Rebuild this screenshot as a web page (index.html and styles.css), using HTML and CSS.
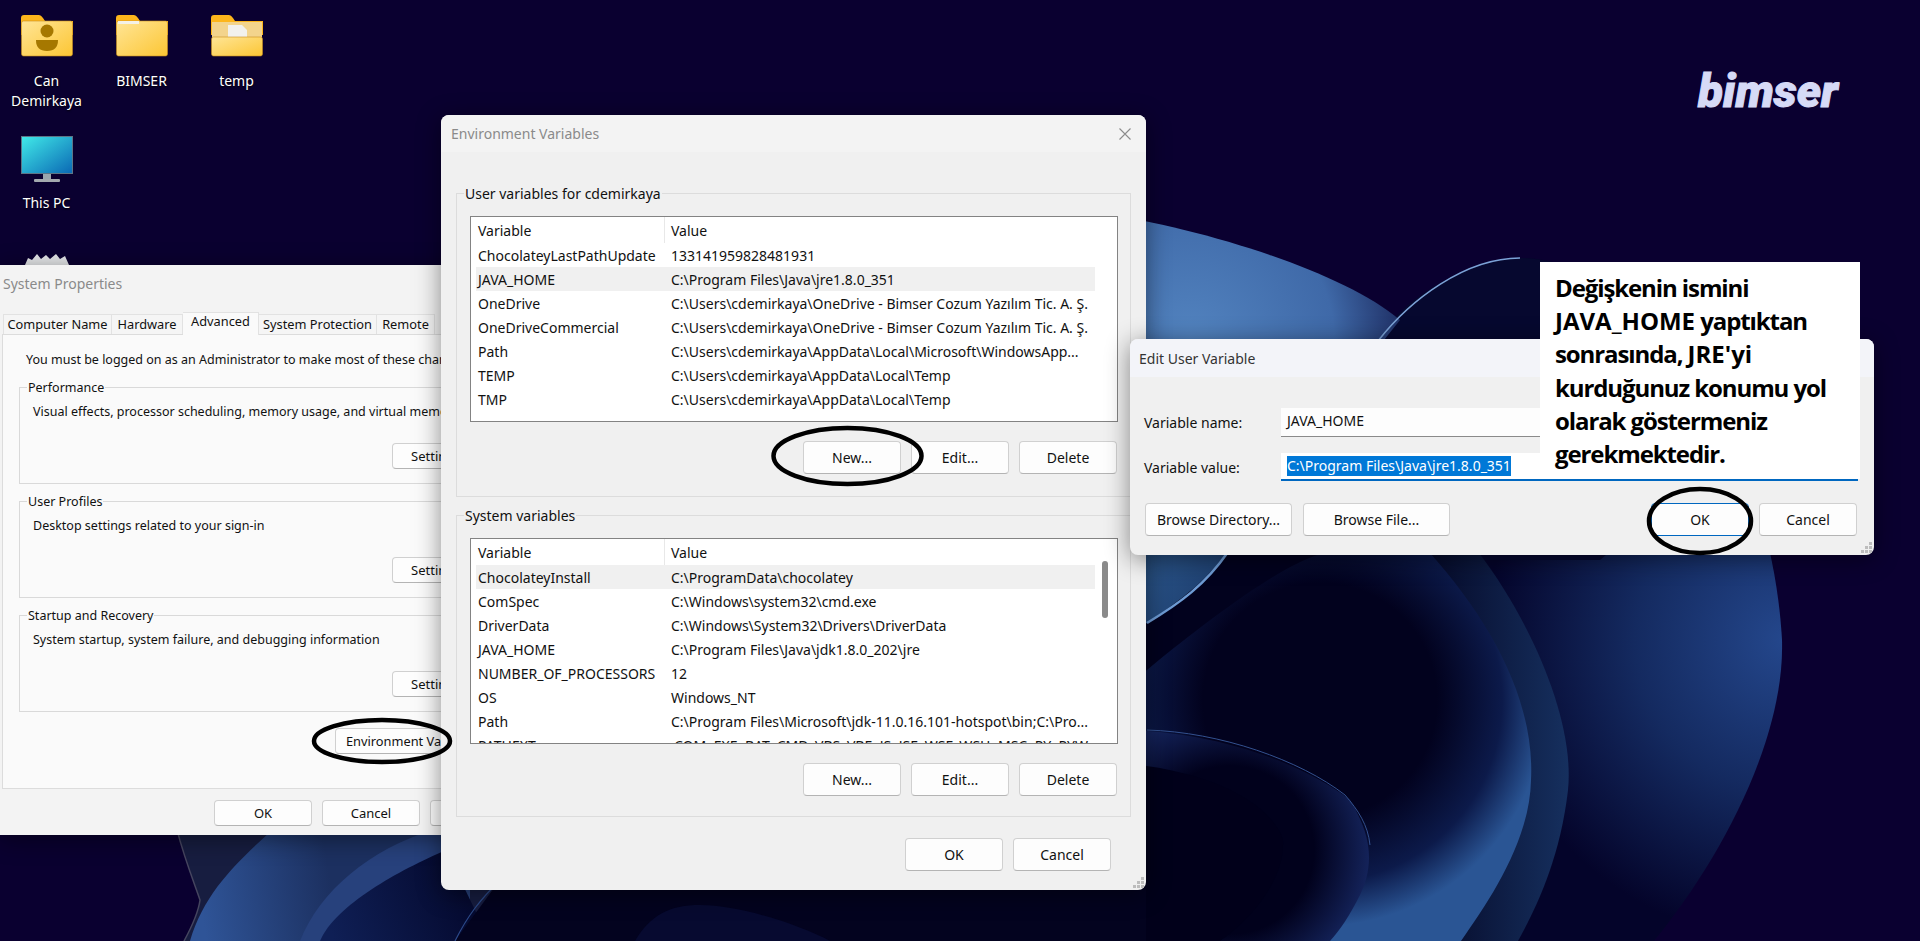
FILE: index.html
```html
<!DOCTYPE html>
<html lang="en">
<head>
    <meta charset="UTF-8">
    <title>Environment Variables</title>
    <link rel="stylesheet" href="styles.css">
</head>
<body>
    <div class="desktop">
        <!-- wallpaper -->
        <svg class="wallpaper" viewBox="0 0 1920 941" width="1920" height="941">
            <defs>
                <radialGradient id="bigGlow" gradientUnits="userSpaceOnUse" cx="1785" cy="640" r="300">
                    <stop offset="0" stop-color="#24478c"/>
                    <stop offset="0.5" stop-color="#142a60"/>
                    <stop offset="1" stop-color="#04042a"/>
                </radialGradient>
                <radialGradient id="brightGlow" gradientUnits="userSpaceOnUse" cx="1190" cy="340" r="240">
                    <stop offset="0" stop-color="#5283bf"/>
                    <stop offset="0.6" stop-color="#3f69a8"/>
                    <stop offset="1" stop-color="#12184a"/>
                </radialGradient>
                <radialGradient id="midGlow" gradientUnits="userSpaceOnUse" cx="1320" cy="700" r="260">
                    <stop offset="0" stop-color="#02021e"/>
                    <stop offset="0.45" stop-color="#02021e"/>
                    <stop offset="0.7" stop-color="#0c1a4a"/>
                    <stop offset="0.87" stop-color="#2a5594"/>
                    <stop offset="1" stop-color="#2a5594"/>
                </radialGradient>
                <linearGradient id="backGlow" gradientUnits="userSpaceOnUse" x1="1400" y1="700" x2="1570" y2="700">
                    <stop offset="0" stop-color="#02021e"/>
                    <stop offset="1" stop-color="#16305f"/>
                </linearGradient>
                <radialGradient id="lineGlow" gradientUnits="userSpaceOnUse" cx="1230" cy="850" r="140">
                    <stop offset="0" stop-color="#01011c"/>
                    <stop offset="0.6" stop-color="#01011c"/>
                    <stop offset="1" stop-color="#14235a"/>
                </radialGradient>
                <linearGradient id="leftBlue" gradientUnits="userSpaceOnUse" x1="200" y1="900" x2="330" y2="880">
                    <stop offset="0" stop-color="#2f5497"/>
                    <stop offset="1" stop-color="#1c3060"/>
                </linearGradient>
                <linearGradient id="leftDark" gradientUnits="userSpaceOnUse" x1="330" y1="930" x2="460" y2="880">
                    <stop offset="0" stop-color="#0f1f55"/>
                    <stop offset="1" stop-color="#050a30"/>
                </linearGradient>
                <linearGradient id="cornerBlue" gradientUnits="userSpaceOnUse" x1="1147" y1="560" x2="1220" y2="600">
                    <stop offset="0" stop-color="#2a5488"/>
                    <stop offset="1" stop-color="#1c3c6c"/>
                </linearGradient>
                <linearGradient id="folderFront" x1="0" y1="0" x2="1" y2="1">
                    <stop offset="0" stop-color="#ffe596"/>
                    <stop offset="1" stop-color="#fcc634"/>
                </linearGradient>
                <linearGradient id="screen" x1="0" y1="0" x2="1" y2="1">
                    <stop offset="0" stop-color="#41ebe9"/>
                    <stop offset="1" stop-color="#0a68b4"/>
                </linearGradient>
            </defs>
            <path d="M1340 420C1400 310 1470 258 1520 258C1640 258 1770 430 1782 640C1785 740 1720 860 1654 941L1300 941Z" fill="url(#bigGlow)"/>
            <path d="M1376 341C1400 300 1470 258 1520 258C1620 258 1700 380 1720 460L1600 560L1340 560Z" fill="#06082f"/>
            <path d="M1100 213C1200 228 1340 270 1400 320L1380 345L1100 345Z" fill="url(#brightGlow)"/>
            <path d="M1378 341C1410 300 1465 258 1520 258" fill="none" stroke="#7ba2d6" stroke-width="1.6"/>
            <path d="M1100 555L1300 555L1300 941L1100 941Z" fill="#02021e"/>
            <path d="M1100 540L1235 540C1210 580 1180 600 1147 623L1100 655Z" fill="url(#cornerBlue)"/>
            <path d="M1228 552C1205 585 1180 603 1147 623" fill="none" stroke="#6d9bd4" stroke-width="2.5"/>
            <path d="M1479 553C1530 620 1575 720 1568 790C1560 860 1535 910 1518 941L1300 941L1300 553Z" fill="url(#backGlow)"/>
            <path d="M1147 670C1220 610 1290 560 1325 553L1430 553C1490 620 1535 700 1531 780C1530 840 1490 900 1461 941L1100 941L1100 700Z" fill="url(#midGlow)"/>
            <path d="M1100 730C1200 726 1300 760 1350 800C1375 840 1372 870 1360 895C1350 915 1340 930 1330 941L1100 941Z" fill="url(#lineGlow)"/>
            <path d="M1147 730C1220 732 1300 760 1345 795C1358 810 1368 825 1370 845" fill="none" stroke="#33518f" stroke-width="1"/>
            <path d="M1100 762C1200 765 1270 800 1283 840C1285 880 1250 920 1220 941L1100 941Z" fill="#01001a"/>
            <!-- bottom left, under the dialogs -->
            <path d="M177 830L1146 830L1146 941L184 941C190 930 198 915 200 900Z" fill="#171d40"/>
            <path d="M190 941C205 890 240 860 272 830L460 830L460 941Z" fill="url(#leftBlue)"/>
            <path d="M300 941C320 890 370 850 432 830L470 830L470 941Z" fill="#27417c"/>
            <path d="M320 941C335 905 400 870 446 850L490 941Z" fill="url(#leftDark)"/>
            <path d="M455 941L500 880L1146 880L1146 941Z" fill="#03031f"/>
            <path d="M455 941C468 915 480 900 500 880" fill="none" stroke="#2c4a8a" stroke-width="1.2"/>
            <path d="M635 941C650 915 670 905 700 905C740 905 800 925 830 941Z" fill="#070a30"/>
            <path d="M177 830C185 860 195 885 200 900C198 915 190 930 184 941" fill="none" stroke="#45455f" stroke-width="1.5"/>
        </svg>

        <div class="desktop-icons">
            <div class="desktop-item">
                <svg class="item-icon" viewBox="0 0 52 46" width="52" height="46">
                    <path d="M0 3Q0 0 3 0H18Q20 0 22 3L24 6H52V20H0Z" fill="#fdb61c"/>
                    <rect class="folder-front" x="0.5" y="6" width="51" height="35" rx="2"/>
                    <circle cx="26" cy="16" r="6.5" fill="#a67800"/>
                    <path d="M15 25H37Q37 36 26 36Q15 36 15 25Z" fill="#a67800"/>
                </svg>
                <span class="item-label">Can Demirkaya</span>
            </div>
            <div class="desktop-item">
                <svg class="item-icon" viewBox="0 0 52 46" width="52" height="46">
                    <path d="M0 3Q0 0 3 0H18Q20 0 22 3L24 6H52V20H0Z" fill="#fdb61c"/>
                    <rect class="folder-front" x="0.5" y="6" width="51" height="35" rx="2"/>
                    <rect x="2" y="6" width="21" height="3" fill="#f4f1e6"/>
                </svg>
                <span class="item-label">BIMSER</span>
            </div>
            <div class="desktop-item">
                <svg class="item-icon" viewBox="0 0 52 46" width="52" height="46">
                    <path d="M0 3Q0 0 3 0H18Q20 0 22 3L24 6H52V20H0Z" fill="#fdb61c"/>
                    <rect x="1" y="7" width="50" height="20" fill="#f3d48c"/>
                    <path d="M17 10H31L36 15V24H17Z" fill="#f2f1ec"/>
                    <rect class="folder-front" x="0.5" y="22" width="51" height="19" rx="2"/>
                </svg>
                <span class="item-label">temp</span>
            </div>
            <div class="desktop-item">
                <svg class="item-icon" viewBox="0 0 52 47" width="52" height="47">
                    <rect x="0.5" y="0.5" width="51" height="37" fill="url(#screen)" stroke="#5d7586"/>
                    <rect x="22" y="38" width="8" height="5" fill="#9aa6ad"/>
                    <rect x="13" y="43" width="26" height="3" rx="1" fill="#a3a9ae"/>
                </svg>
                <span class="item-label">This PC</span>
            </div>
            <div class="desktop-item spacer"></div>
            <div class="desktop-item spacer"></div>
            <div class="desktop-item">
                <svg class="item-icon" viewBox="0 0 52 46" width="52" height="46">
                    <path d="M4 12L7 5L11 7L16 1L20 6L25 2L29 6L35 1L39 6L44 3L48 12V30H4Z" fill="#e6e8ea"/>
                </svg>
            </div>
        </div>

        <div class="logo">bimser</div>

        <!-- System Properties -->
        <div class="window sys-window">
            <div class="title-bar sys-title">System Properties</div>
            <div class="tabs">
                <div class="tab">Computer Name</div>
                <div class="tab">Hardware</div>
                <div class="tab active">Advanced</div>
                <div class="tab">System Protection</div>
                <div class="tab">Remote</div>
            </div>
            <div class="tab-panel">
                <p class="intro">You must be logged on as an Administrator to make most of these changes.</p>
                <fieldset class="sys-group">
                    <legend>Performance</legend>
                    <p>Visual effects, processor scheduling, memory usage, and virtual memory</p>
                    <div class="group-actions"><button class="btn btn-small">Settings...</button></div>
                </fieldset>
                <fieldset class="sys-group">
                    <legend>User Profiles</legend>
                    <p>Desktop settings related to your sign-in</p>
                    <div class="group-actions"><button class="btn btn-small">Settings...</button></div>
                </fieldset>
                <fieldset class="sys-group">
                    <legend>Startup and Recovery</legend>
                    <p>System startup, system failure, and debugging information</p>
                    <div class="group-actions"><button class="btn btn-small">Settings...</button></div>
                </fieldset>
                <div class="env-row"><button class="btn btn-small btn-env">Environment Variables...</button></div>
            </div>
            <div class="sys-footer">
                <button class="btn btn-small">OK</button>
                <button class="btn btn-small">Cancel</button>
                <button class="btn btn-small">Apply</button>
            </div>
        </div>

        <!-- Environment Variables -->
        <div class="window env-window">
            <div class="title-bar env-title">
                <span>Environment Variables</span>
                <svg class="close-icon" viewBox="0 0 12 12" width="12" height="12">
                    <path d="M0.5 0.5L11.5 11.5M11.5 0.5L0.5 11.5" stroke="#8c8c8c" stroke-width="1.1" fill="none"/>
                </svg>
            </div>
            <fieldset class="env-group user-group">
                <legend>User variables for cdemirkaya</legend>
                <div class="var-list user-list">
                    <div class="var-table">
                        <div class="var-row var-head"><span>Variable</span><span>Value</span></div>
                        <div class="var-row"><span>ChocolateyLastPathUpdate</span><span>133141959828481931</span></div>
                        <div class="var-row selected"><span>JAVA_HOME</span><span>C:\Program Files\Java\jre1.8.0_351</span></div>
                        <div class="var-row"><span>OneDrive</span><span>C:\Users\cdemirkaya\OneDrive - Bimser Cozum Yazılım Tic. A. Ş.</span></div>
                        <div class="var-row"><span>OneDriveCommercial</span><span>C:\Users\cdemirkaya\OneDrive - Bimser Cozum Yazılım Tic. A. Ş.</span></div>
                        <div class="var-row"><span>Path</span><span>C:\Users\cdemirkaya\AppData\Local\Microsoft\WindowsApp...</span></div>
                        <div class="var-row"><span>TEMP</span><span>C:\Users\cdemirkaya\AppData\Local\Temp</span></div>
                        <div class="var-row"><span>TMP</span><span>C:\Users\cdemirkaya\AppData\Local\Temp</span></div>
                    </div>
                </div>
                <div class="list-actions">
                    <button class="btn">New...</button>
                    <button class="btn">Edit...</button>
                    <button class="btn">Delete</button>
                </div>
            </fieldset>
            <fieldset class="env-group system-group">
                <legend>System variables</legend>
                <div class="var-list system-list">
                    <div class="var-table">
                        <div class="var-row var-head"><span>Variable</span><span>Value</span></div>
                        <div class="var-row selected"><span>ChocolateyInstall</span><span>C:\ProgramData\chocolatey</span></div>
                        <div class="var-row"><span>ComSpec</span><span>C:\Windows\system32\cmd.exe</span></div>
                        <div class="var-row"><span>DriverData</span><span>C:\Windows\System32\Drivers\DriverData</span></div>
                        <div class="var-row"><span>JAVA_HOME</span><span>C:\Program Files\Java\jdk1.8.0_202\jre</span></div>
                        <div class="var-row"><span>NUMBER_OF_PROCESSORS</span><span>12</span></div>
                        <div class="var-row"><span>OS</span><span>Windows_NT</span></div>
                        <div class="var-row"><span>Path</span><span>C:\Program Files\Microsoft\jdk-11.0.16.101-hotspot\bin;C:\Pro...</span></div>
                        <div class="var-row"><span>PATHEXT</span><span>.COM;.EXE;.BAT;.CMD;.VBS;.VBE;.JS;.JSE;.WSF;.WSH;.MSC;.PY;.PYW</span></div>
                    </div>
                    <div class="scroll-track"><div class="scroll-thumb"></div></div>
                </div>
                <div class="list-actions">
                    <button class="btn">New...</button>
                    <button class="btn">Edit...</button>
                    <button class="btn">Delete</button>
                </div>
            </fieldset>
            <div class="env-footer">
                <button class="btn">OK</button>
                <button class="btn">Cancel</button>
            </div>
            <svg class="grip" viewBox="0 0 12 12" width="12" height="12">
                <path d="M8 0h3v3H8zM4 4h3v3H4zM8 4h3v3H8zM0 8h3v3H0zM4 8h3v3H4zM8 8h3v3H8z" fill="#bdbdbd"/>
            </svg>
        </div>

        <!-- Edit User Variable -->
        <div class="window edit-window">
            <div class="title-bar edit-title">Edit User Variable</div>
            <div class="edit-form">
                <label>Variable name:</label>
                <div class="text-field">JAVA_HOME</div>
                <label>Variable value:</label>
                <div class="text-field focused"><span class="selection">C:\Program Files\Java\jre1.8.0_351</span></div>
            </div>
            <div class="edit-actions">
                <button class="btn btn-browse">Browse Directory...</button>
                <button class="btn btn-browse">Browse File...</button>
                <div class="actions-gap"></div>
                <button class="btn btn-default">OK</button>
                <button class="btn">Cancel</button>
            </div>
            <svg class="grip" viewBox="0 0 12 12" width="12" height="12">
                <path d="M8 0h3v3H8zM4 4h3v3H4zM8 4h3v3H8zM0 8h3v3H0zM4 8h3v3H4zM8 8h3v3H8z" fill="#bdbdbd"/>
            </svg>
        </div>

        <!-- note and hand drawn circles laid over the screenshot -->
        <div class="note">
            <div>Değişkenin ismini</div>
            <div><span class="caps">JAVA_HOME</span> yaptıktan</div>
            <div>sonrasında, <span class="caps">JRE'yi</span></div>
            <div>kurduğunuz konumu yol</div>
            <div>olarak göstermeniz</div>
            <div>gerekmektedir.</div>
        </div>
        <svg class="circles" viewBox="0 0 1920 941" width="1920" height="941">
            <ellipse cx="382" cy="741" rx="68" ry="21"/>
            <ellipse cx="847.5" cy="456" rx="74" ry="28"/>
            <ellipse cx="1700" cy="521" rx="51" ry="32"/>
        </svg>
    </div>
</body>
</html>
```

FILE: styles.css
```css
* {
    margin: 0;
    padding: 0;
    box-sizing: border-box;
}

body {
    background: #0a0030;
    font-family: 'Noto Sans', sans-serif;
    font-size: 12.5px;
    color: #111;
    overflow: hidden;
}

.desktop {
    position: relative;
    width: 1920px;
    height: 941px;
    overflow: hidden;
}

.wallpaper {
    position: absolute;
    left: 0;
    top: 0;
}

.desktop-icons {
    position: relative;
    display: grid;
    grid-template-columns: repeat(3, 95px);
    grid-template-rows: 121px 117px 100px;
    margin-left: -1px;
    padding-top: 15px;
    width: 285px;
}

.desktop-item {
    display: flex;
    flex-direction: column;
    align-items: center;
}

.item-icon {
    display: block;
    flex-shrink: 0;
}

.folder-front {
    fill: url(#folderFront);
    stroke: #c98f1c;
    stroke-width: 0.6;
}

.item-label {
    margin-top: 10px;
    width: 80px;
    color: #fff;
    font-size: 14px;
    line-height: 20px;
    text-align: center;
    text-shadow: 0 1px 2px #000;
}

.logo {
    position: absolute;
    left: 1698px;
    top: 61px;
    color: #d6daf6;
    font-family: 'Roboto', sans-serif;
    font-size: 46px;
    font-style: italic;
    font-weight: 900;
    line-height: 60px;
    -webkit-text-stroke: 1px #d6daf6;
}

.window {
    position: absolute;
    background: #f0f0f0;
    box-shadow: 0 4px 24px rgba(0, 0, 0, 0.45);
}

.title-bar {
    color: #8a8a8a;
    font-size: 14px;
}

/* System Properties */
.sys-window {
    left: 0;
    top: 265px;
    width: 540px;
    height: 570px;
    background: #f3f3f3;
    border-radius: 0 0 8px 0;
}

.sys-title {
    height: 47px;
    padding: 9px 3px 0;
    line-height: 20px;
}

.tabs {
    display: grid;
    grid-template-columns: 109px 71px 76px 118px 58px;
    align-items: end;
    height: 22px;
    padding-left: 3px;
    font-size: 12.8px;
    text-align: center;
}

.tab {
    height: 20px;
    background: #f5f5f5;
    border: 1px solid #e2e2e2;
    border-bottom: 0;
    border-left-width: 0;
    line-height: 18px;
    white-space: nowrap;
}

.tab:first-child {
    border-left-width: 1px;
}

.tab.active {
    height: 23px;
    margin-bottom: -1px;
    position: relative;
    background: #fafafa;
    line-height: 17px;
}

.tab-panel {
    height: 455px;
    margin: 0 4px 0 2px;
    padding: 16px 15px 0 16px;
    background: #fafafa;
    border: 1px solid #dcdcdc;
    line-height: 18px;
}

.intro {
    padding-left: 7px;
    white-space: nowrap;
    margin-bottom: 9px;
}

.sys-group {
    height: 106px;
    margin-bottom: 8px;
    padding: 0 29px 0 13px;
    border: 1px solid #d9d9d9;
    min-width: 0;
}

.sys-group legend {
    position: relative;
    top: 1px;
    margin-left: -6px;
    padding: 0 1px;
}

.sys-group p {
    margin-top: 7px;
    white-space: nowrap;
}

.group-actions {
    display: flex;
    justify-content: flex-end;
    margin-top: 22px;
}

.env-row {
    display: flex;
    justify-content: flex-end;
    margin-top: 16px;
    padding-right: 29px;
}

.sys-footer {
    display: flex;
    justify-content: flex-end;
    gap: 10px;
    padding: 11px 12px 0 0;
}

.btn {
    width: 98px;
    height: 33px;
    background: #fdfdfd;
    border: 1px solid #d0d0d0;
    border-bottom-color: #b4b4b4;
    border-radius: 4px;
    color: #111;
    font-family: inherit;
    font-size: 14px;
}

.btn-small {
    height: 26px;
    font-size: 13px;
}

.btn-env {
    width: 156px;
    padding-left: 10px;
    font-size: 12.8px;
    text-align: left;
    white-space: nowrap;
}

/* Environment Variables */
.env-window {
    left: 441px;
    top: 115px;
    width: 705px;
    height: 775px;
    border-radius: 8px;
    font-size: 14px;
    z-index: 1;
}

.env-title {
    display: flex;
    justify-content: space-between;
    align-items: center;
    height: 37px;
    padding: 0 15px 0 10px;
    background: #f3f3f3;
    border-radius: 8px 8px 0 0;
}

.close-icon {
    display: block;
}

.env-group {
    margin-left: 15px;
    width: 675px;
    padding: 0 12px 0 13px;
    border: 1px solid #dcdcdc;
    min-width: 0;
    line-height: 18px;
}

.env-group legend {
    position: relative;
    top: 1px;
    margin-left: -6px;
    padding: 0 1px;
}

.user-group {
    height: 313px;
    margin-top: 32px;
}

.system-group {
    height: 311px;
    margin-top: 9px;
}

.var-list {
    display: flex;
    height: 206px;
    margin-top: 14px;
    background: #fff;
    border: 1px solid #838383;
    padding-left: 5px;
    overflow: hidden;
}

.var-table {
    width: 619px;
    flex-shrink: 0;
}

.var-row {
    display: grid;
    grid-template-columns: 188px 431px;
    height: 24px;
    line-height: 26px;
}

.var-row span {
    overflow: hidden;
    white-space: nowrap;
    padding-left: 2px;
}

.var-row span + span {
    padding-left: 7px;
}

.var-head {
    height: 26px;
    line-height: 28px;
}

.var-head span + span {
    border-left: 1px solid #e8e8e8;
    padding-left: 6px;
}

.selected {
    background: #f0f0f0;
}

.scroll-track {
    flex: 1;
    padding: 22px 0 0 7px;
}

.scroll-thumb {
    width: 6px;
    height: 57px;
    background: #8a8a8a;
    border-radius: 3px;
}

.list-actions {
    display: flex;
    justify-content: flex-end;
    gap: 10px;
    margin-top: 19px;
    padding-right: 1px;
}

.env-footer {
    display: flex;
    justify-content: flex-end;
    gap: 10px;
    margin-top: 21px;
    padding-right: 35px;
}

.grip {
    position: absolute;
    right: 1px;
    bottom: 1px;
}

/* Edit User Variable */
.edit-window {
    left: 1130px;
    top: 339px;
    width: 744px;
    height: 216px;
    border-radius: 8px;
    font-size: 14px;
    z-index: 2;
}

.edit-title {
    height: 38px;
    padding: 10px 9px 0;
    background: #f3f4f9;
    border-radius: 8px 8px 0 0;
    line-height: 20px;
    color: #333;
}

.edit-form {
    display: grid;
    grid-template-columns: 137px 577px;
    align-items: center;
    row-gap: 16px;
    padding: 31px 0 0 14px;
}

.text-field {
    height: 29px;
    padding-left: 6px;
    background: #fdfdfd;
    border-bottom: 1px solid #8a8a8a;
    line-height: 25px;
}

.text-field.focused {
    height: 28px;
    background: #fff;
    border-bottom: 2px solid #0067c0;
}

.selection {
    display: inline-block;
    line-height: 20px;
    background: #0078d7;
    color: #fff;
}

.edit-actions {
    display: flex;
    gap: 11px;
    margin-top: 22px;
    padding: 0 17px 0 15px;
}

.btn-browse {
    width: 147px;
}

.actions-gap {
    flex: 1;
}

.btn-default {
    margin-right: -1px;
    border-color: #0067c0;
}

/* overlay */
.note {
    position: absolute;
    left: 1540px;
    top: 262px;
    width: 320px;
    height: 217px;
    padding: 9px 15px;
    background: #fff;
    color: #000;
    font-family: 'Open Sans', sans-serif;
    font-size: 24px;
    font-weight: 700;
    letter-spacing: -1.1px;
    line-height: 33.2px;
    white-space: nowrap;
    z-index: 3;
}

.caps {
    letter-spacing: 0;
}

.circles {
    position: absolute;
    left: 0;
    top: 0;
    z-index: 4;
    pointer-events: none;
}

.circles ellipse {
    fill: none;
    stroke: #000;
    stroke-width: 4.5;
}
```
